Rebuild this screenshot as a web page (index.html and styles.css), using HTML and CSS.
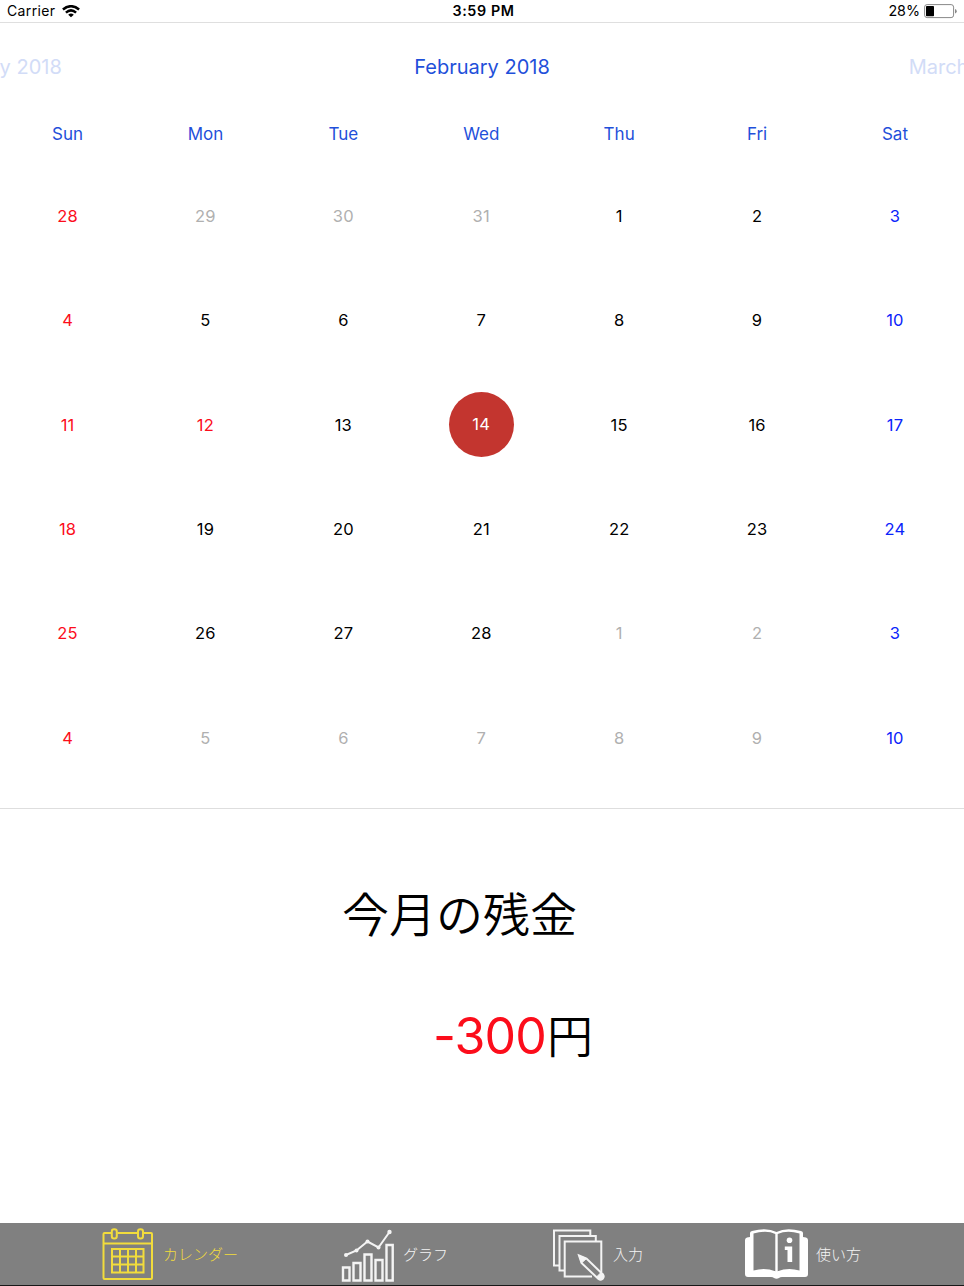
FILE: index.html
```html
<!DOCTYPE html>
<html lang="ja">
<head>
<meta charset="utf-8">
<title>カレンダー</title>
<link rel="stylesheet" href="styles.css">
</head>
<body>
<header class="status">
  <div class="status-left"><span class="carrier">Carrier</span>
    <svg class="wifi" width="18" height="13" viewBox="0 0 18 13" fill="none" stroke="#000" stroke-width="2.5"><path d="M.9 4.500Q9-2.100 17.100 4.500M3.900 7.600Q9 3.200 14.100 7.600"/><path d="M9 12.300 6.200 9.700Q9 7.500 11.800 9.700Z" fill="#000" stroke="none"/></svg>
  </div>
  <div class="clock">3:59 PM</div>
  <div class="status-right"><span class="percent">28%</span>
    <svg width="33" height="15" viewBox="0 0 33 15"><rect x=".6" y=".6" width="29" height="13" rx="2.5" fill="#fff" stroke="#888" stroke-width="1"/><rect x="2" y="2" width="8" height="10.2" rx=".8"/><path d="M31 5v4.500Q32.700 9 32.700 7.200T31 5Z" fill="#888"/></svg>
  </div>
</header>
<main>
  <div class="months"><span class="month faded">January 2018</span><span class="month">February 2018</span><span class="month faded">March 2018</span></div>
  <div class="weekdays"><span>Sun</span><span>Mon</span><span>Tue</span><span>Wed</span><span>Thu</span><span>Fri</span><span>Sat</span></div>
  <div class="days">
    <span class="red">28</span><span class="out">29</span><span class="out">30</span><span class="out">31</span><span>1</span><span>2</span><span class="blue">3</span>
    <span class="red">4</span><span>5</span><span>6</span><span>7</span><span>8</span><span>9</span><span class="blue">10</span>
    <span class="red">11</span><span class="red">12</span><span>13</span><span><b class="today">14</b></span><span>15</span><span>16</span><span class="blue">17</span>
    <span class="red">18</span><span>19</span><span>20</span><span>21</span><span>22</span><span>23</span><span class="blue">24</span>
    <span class="red">25</span><span>26</span><span>27</span><span>28</span><span class="out">1</span><span class="out">2</span><span class="blue">3</span>
    <span class="red">4</span><span class="out">5</span><span class="out">6</span><span class="out">7</span><span class="out">8</span><span class="out">9</span><span class="blue">10</span>
  </div>
  <section class="balance">
    <h1 class="balance-title">今月の残金</h1>
    <p class="balance-value"><span class="amount">-300</span><span class="yen">円</span></p>
  </section>
</main>
<nav class="tabs">
  <a class="tab tab-calendar">
    <svg width="52" height="54" viewBox="0 0 52 54" fill="none" stroke="#f2dc3c" stroke-width="2"><path d="M9 5H2.500Q1.500 5 1.500 6V50Q1.500 51 2.500 51H49Q50 51 50 50V6Q50 5 49 5H42M15.500 5H36M1.500 15.500H50"/><rect x="9.800" y="1.200" width="5" height="9.300" rx="2.300"/><rect x="36" y="1.200" width="5" height="9.300" rx="2.300"/><path d="M10 21H41.500V44.500H10ZM18 21V44.500M26 21V44.500M34 21V44.500M10 28.500H41.500M10 36.500H41.500"/></svg>
    <span class="tab-label">カレンダー</span>
  </a>
  <a class="tab tab-chart">
    <svg width="54" height="54" viewBox="0 0 54 54" fill="none" stroke="#f4f4f4" stroke-width="2.400"><path d="M2 39.500H8.500V52.500H2ZM12.500 35H19.500V52.500H12.500ZM23.500 26.500H30.500V52.500H23.500ZM34.500 32H41.500V52.500H34.500ZM45.500 17H51.700V52.500H45.500Z"/><path d="M5 27 15.500 22.500 26.500 13.500 37.500 19.500 48.500 4" stroke-width="2"/><g fill="#f4f4f4" stroke="none"><circle cx="5" cy="27" r="2"/><circle cx="15.500" cy="22.500" r="2"/><circle cx="26.500" cy="13.500" r="2"/><circle cx="37.500" cy="19.500" r="2"/><circle cx="48.500" cy="4" r="2.200"/></g></svg>
    <span class="tab-label">グラフ</span>
  </a>
  <a class="tab tab-input">
    <svg width="54" height="54" viewBox="0 0 54 54" fill="none" stroke="#f4f4f4" stroke-width="2"><path d="M6.500 37.500H2V2.500H38.300V7.500M12 42.500H7.500V8H43.800V13"/><path d="M40 48.500H12.700V13.500H49.300V44"/><path d="M27 27.500 34.500 30.500 51 46.500Q52.500 49 50.500 51 48.500 52.500 46.500 51L29.500 35Z" fill="#808080"/><path d="M27 27.500 34.500 30.500 29.500 35ZM44.500 49 49 44.500 51.500 47Q52.500 49.500 50.500 51T46 50.500Z" fill="#f4f4f4" stroke-width="1"/></svg>
    <span class="tab-label">入力</span>
  </a>
  <a class="tab tab-help">
    <svg width="64" height="52" viewBox="0 0 64 52"><path d="M0 11Q0 9 2 8.500L5 8V4Q5 2.500 7 2 22-2 31.500 3 41-2 56 2 58 2.500 58 4V8L61 8.500Q63 9 63 11V45Q63 48 60 48H37Q35 48 34 49 31.500 50.500 29 49 28 48 26 48H3Q0 48 0 45Z" fill="#fff"/><path d="M8.500 4.500Q22 .8 30.300 5V42.300Q20 38 8.500 41.500ZM32.700 5Q42 .8 54.500 4.500V41.500Q43 38 32.700 42.300Z" fill="#808080"/><path d="M39.800 17.500H47.200V33H42.500V21H39.800Z" fill="#fff"/><circle cx="44.500" cy="11.300" r="2.800" fill="#fff"/></svg>
    <span class="tab-label">使い方</span>
  </a>
</nav>
</body>
</html>
```

FILE: styles.css
```css
* { box-sizing: border-box; }
body {
  margin: 0;
  height: 1286px;
  display: flex;
  flex-direction: column;
  overflow: hidden;
  background: #fff;
  color: #000;
  font-family: Inter, "Noto Sans CJK JP", sans-serif;
}
.status {
  height: 23px;
  padding: 0 6px 0 7px;
  display: grid;
  grid-template-columns: 1fr auto 1fr;
  align-items: center;
  border-bottom: 1px solid #dfdfdf;
  font-size: 14px;
  line-height: 22px;
}
.status-left, .status-right { display: flex; align-items: center; }
.status-left { gap: 7px; }
.status-right { justify-content: flex-end; gap: 4px; }
.carrier { letter-spacing: .35px; }
.percent { font-size: 14.300px; }
.status-right svg { margin-right: 1px; }
.wifi { display: block; }
.clock { margin-left: 2px; font-weight: 600; font-size: 14.300px; letter-spacing: .6px; }
main { flex: 1; display: flex; flex-direction: column; }
.months {
  height: 86px;
  padding-top: 1px;
  display: flex;
  justify-content: center;
  overflow: hidden;
  color: #1f50da;
  font-size: 20px;
  line-height: 86px;
}
.month { flex: 0 0 482px; text-align: center; }
.month:first-child { text-indent: -4px; }
.faded { color: #d2dcf7; }
.weekdays, .days {
  width: 965.300px;
  margin-left: -1.400px;
  display: grid;
  grid-template-columns: repeat(7, 1fr);
  text-align: center;
}
.weekdays { height: 55px; color: #1f50da; font-size: 17px; line-height: 51px; }
.days {
  height: 626px;
  grid-template-rows: repeat(6, 1fr);
  font-size: 16.500px;
  letter-spacing: .2px;
}
.days span { display: flex; align-items: center; justify-content: center; }
.days .red { color: #fc0d1b; }
.days .blue { color: #0b24fb; }
.days .out { color: #b0b0b0; }
.today {
  width: 65px;
  height: 65px;
  border-radius: 50%;
  background: #c3352f;
  color: #fff;
  font-weight: 400;
  line-height: 65px;
}
.balance {
  flex: 1;
  margin-top: 17.500px;
  padding-top: 71px;
  border-top: 1px solid #dedede;
}
.balance-title {
  margin: 0 0 0 342px;
  font-size: 47px;
  font-weight: 350;
  line-height: 70px;
}
.balance-value {
  margin: 51px 0 0 433px;
  display: flex;
  font-size: 46px;
  font-weight: 350;
  line-height: 71px;
}
.amount {
  width: 114px;
  color: #fc0d1b;
  font-size: 50px;
  font-weight: 400;
  letter-spacing: -.9px;
}
.tabs {
  height: 63px;
  display: flex;
  background: #808080;
  border-bottom: 1px solid #181818;
  color: #f4f4f4;
  font-size: 15px;
  font-weight: 300;
}
.tab { display: flex; align-items: center; padding-top: 1px; }
.tab-label { margin-top: -3px; }
.tab-calendar { width: 239px; margin-left: 102px; gap: 9px; color: #f2dc3c; }
.tab-chart { width: 211px; gap: 8px; }
.tab-input { width: 193px; gap: 7px; }
.tab-help { gap: 7px; }
```
